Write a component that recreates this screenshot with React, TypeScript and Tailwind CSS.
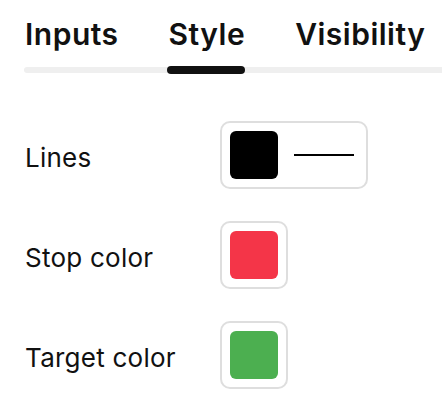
import React from "react";

const tabs = ["Inputs", "Style", "Visibility"];

function Swatch({ color }: { color: string }) {
  return <div className="h-12 w-12 rounded-[6px]" style={{ backgroundColor: color }} />;
}

export default function App() {
  return (
    <div className="h-[408px] w-[442px] overflow-hidden bg-white font-['Inter',sans-serif] text-[#111]">
      {/* Tabs */}
      <div className="pl-6 pt-[14px]">
        <div className="flex gap-[50px] pl-px">
          {tabs.map((t) => (
            <span key={t} className="text-[30px] font-semibold leading-[40px] tracking-[0.5px]">
              {t}
            </span>
          ))}
        </div>
        <div className="relative mt-[13px] h-[6px] rounded-l-full bg-[#efefef]">
          <div className="absolute left-[143px] top-[-1px] h-2 w-[78px] rounded-full bg-[#111]" />
        </div>
      </div>

      {/* Rows */}
      <div className="mt-[48px] flex flex-col gap-8 pl-6">
        <div className="flex items-center">
          <span className="w-[196px] pl-px pt-[5px] text-[26px] leading-8 tracking-[0.25px]">Lines</span>
          <div className="flex items-center gap-4 rounded-[10px] border-2 border-[#dedede] py-2 pl-2 pr-3">
            <Swatch color="#000000" />
            <div className="h-[2px] w-[60px] bg-black" />
          </div>
        </div>
        <div className="flex items-center">
          <span className="w-[196px] pl-px pt-[5px] text-[26px] leading-8 tracking-[0.25px]">Stop color</span>
          <div className="rounded-[10px] border-2 border-[#dedede] p-2">
            <Swatch color="#f43548" />
          </div>
        </div>
        <div className="flex items-center">
          <span className="w-[196px] pl-px pt-[5px] text-[26px] leading-8 tracking-[0.25px]">Target color</span>
          <div className="rounded-[10px] border-2 border-[#dedede] p-2">
            <Swatch color="#4caf50" />
          </div>
        </div>
      </div>
    </div>
  );
}
